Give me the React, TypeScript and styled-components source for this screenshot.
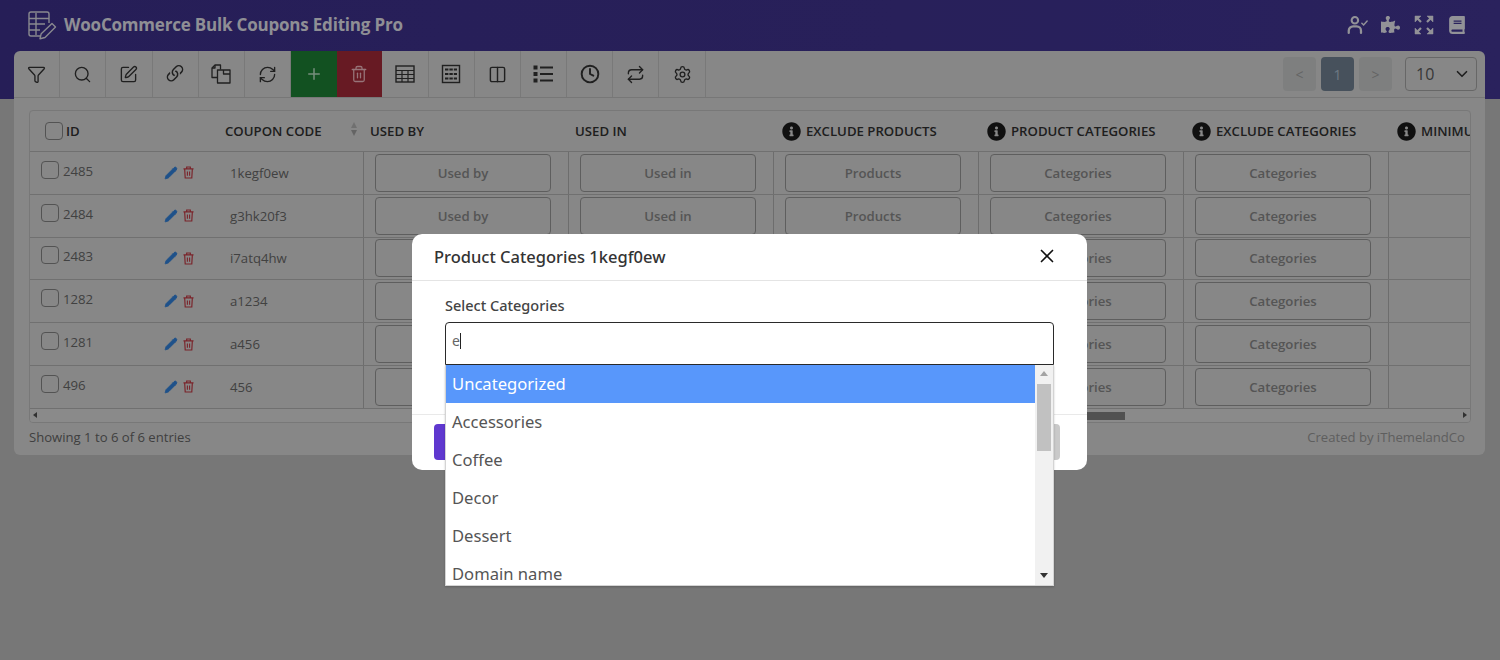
import React from 'react';
import styled, { createGlobalStyle } from 'styled-components';
import { Funnel, Search, SquarePen, RefreshCw, Plus, Trash2, Columns2, Clock, Repeat, Settings, Pencil, ChevronDown, X } from 'lucide-react';
import { FaPuzzlePiece, FaBook, FaInfoCircle } from 'react-icons/fa';
import { BsLink45Deg } from 'react-icons/bs';

const Global = createGlobalStyle`
  html, body { margin: 0; padding: 0; }
  body { background: #a3a3a3; font-family: "Open Sans", "Liberation Sans", sans-serif; overflow: hidden; }
  #root { width: 1500px; height: 660px; position: relative; overflow: hidden; }
`;

const Top = styled.header`
  height: 99px; box-sizing: border-box; padding: 0 33px 50px 27px;
  background: linear-gradient(90deg, #352a78 0%, #372c7c 60%, #3a2f80 100%);
  display: flex; align-items: center; gap: 7px;
`;
const Title = styled.h1`
  margin: 0; font-size: 17px; font-weight: 700; flex: 1; color: #c4c4cc; letter-spacing: -0.2px;
`;
const TopIcons = styled.div`
  display: flex; gap: 12px; align-items: center; color: #c8c8d0;
`;
const TopIcon = styled.span`
  width: 21px; height: 24px; display: flex; align-items: center; justify-content: center;
`;
const Card = styled.main`
  margin: -48px 15px 0 14px; height: 404px; background: #b9b9b9; border-radius: 6px;
  display: flex; flex-direction: column;
`;
const Toolbar = styled.div`
  height: 46px; display: flex; align-items: stretch; border-bottom: 1px solid #a4a4a4; flex: none;
  padding-right: 8px;
`;
const Tool = styled.button<{ $bg?: string; $fg?: string; $w?: number }>`
  width: ${p => p.$w ?? 46.2}px; flex: none; border: 0; padding: 0; display: flex; align-items: center; justify-content: center;
  background: ${p => p.$bg ?? 'transparent'}; color: ${p => p.$fg ?? '#2c2c2c'};
  border-right: 1px solid ${p => (p.$bg ? 'transparent' : '#a6a6a6')};
  &:first-child { border-top-left-radius: 6px; }
`;
const Pager = styled.div`
  margin-left: auto; display: flex; align-items: center; gap: 5px;
`;
const PageBtn = styled.span<{ $active?: boolean }>`
  width: 33px; height: 34px; border-radius: 4px; display: flex; align-items: center; justify-content: center;
  font-size: 14px; background: ${p => (p.$active ? '#62707e' : '#adafaf')}; color: ${p => (p.$active ? '#98a6b5' : '#8a8a8a')};
`;
const PerPage = styled.div`
  margin-left: 8px; width: 72px; height: 34px; box-sizing: border-box; border: 1px solid #8e8e8e; border-radius: 4px; display: flex; align-items: center;
  justify-content: space-between; padding: 0 5px 0 10px; font-size: 16px; color: #4d4d4d;
`;
const TableWrap = styled.section`
  margin: 12px 14px 0 15px; height: 313px; flex: none; box-sizing: border-box; border: 1px solid #a5a5a5; border-radius: 4px;
  overflow: hidden; position: relative; display: flex; flex-direction: column;
`;
const Row = styled.div<{ $head?: boolean }>`
  display: grid; grid-template-columns: 187px 147px repeat(5, 205px) 200px; flex: none;
  height: ${p => (p.$head ? 41 : 42.8)}px; border-bottom: 1px solid #9a9a9a; box-sizing: border-box;
`;
const HeadCell = styled.div<{ $pad?: number }>`
  display: flex; align-items: center; gap: 5px; padding-left: ${p => p.$pad ?? 8}px; font-size: 13.2px; font-weight: 600;
  color: #2a2a2a; white-space: nowrap; position: relative; overflow: hidden; text-transform: uppercase;
`;
const IdHead = styled(HeadCell)`
  gap: 3px; padding-left: 15px;
`;
const Cell = styled.div<{ $line?: boolean; $pad?: number }>`
  display: flex; align-items: center; box-sizing: border-box; padding-left: ${p => p.$pad ?? 0}px;
  font-size: 13.2px; color: #595959; border-right: 1px solid ${p => (p.$line === false ? 'transparent' : '#969696')}; min-width: 0;
`;
const Check = styled.span`
  width: 16px; height: 16px; border: 1px solid #727272; border-radius: 4px; flex: none; display: block;
`;
const IdCell = styled(Cell)`
  padding-left: 11px; gap: 4px;
`;
const IdText = styled.span`
  position: relative; top: -2px; width: 97px;
`;
const RowCheck = styled(Check)`
  position: relative; top: -3px;
`;
const ActionIcons = styled.span`
  display: flex; gap: 5px; align-items: center; color: #2a6fbd;
`;
const Sort = styled.span`
  position: absolute; right: 7px; top: 11px; display: flex; flex-direction: column; gap: 2px;
`;
const SortTri = styled.i<{ $down?: boolean }>`
  display: block; width: 0; height: 0; border-left: 3.5px solid transparent; border-right: 3.5px solid transparent;
  ${p => (p.$down ? 'border-top: 6px solid #8a8a8a;' : 'border-bottom: 6px solid #9a9a9a;')}
`;
const CellBtn = styled.button`
  width: 176px; height: 38px; margin-left: 11px; padding: 0; border: 1px solid #828282; border-radius: 4px; background: transparent;
  font: 600 13.2px "Open Sans", sans-serif; color: #757575;
`;
const HScroll = styled.div`
  flex: 1; position: relative; background: #bdbdbd; display: flex; align-items: center; justify-content: space-between; padding: 0 3px;
`;
const Arrow = styled.i<{ $dir: 'l' | 'r' }>`
  display: block; width: 0; height: 0; border-top: 3px solid transparent; border-bottom: 3px solid transparent;
  ${p => (p.$dir === 'l' ? 'border-right: 4px solid #444;' : 'border-left: 4px solid #444;')}
`;
const Thumb = styled.i`
  position: absolute; left: 570px; width: 525px; top: 3px; height: 8px; background: #707070;
`;
const CardFoot = styled.footer`
  flex: 1; display: flex; align-items: center; justify-content: space-between; padding: 0 20px 4px 15px; font-size: 13.1px; color: #575757;
`;
const Credit = styled.span`
  color: #828282;
`;
const Backdrop = styled.div`
  position: absolute; inset: 0; background: rgba(0,0,0,.27); display: flex; justify-content: center; align-items: flex-start; padding-top: 234px;
`;
const Modal = styled.div`
  width: 675px; height: 236px; background: #fff; border-radius: 10px; display: flex; flex-direction: column; margin-right: 1px;
  font-family: "Noto Sans", "Open Sans", sans-serif; position: relative;
`;
const ModalHead = styled.div`
  height: 47px; flex: none; box-sizing: border-box; padding: 0 29px 2px 22px; border-bottom: 1px solid #e4e4e4; display: flex; align-items: center; justify-content: space-between;
  color: #333; font-size: 16.5px; font-weight: 500;
`;
const ModalBody = styled.div`
  height: 134px; flex: none; box-sizing: border-box; padding: 14px 33px 0; border-bottom: 1px solid #e9e9e9;
`;
const Label = styled.label`
  display: block; font-size: 14.5px; font-weight: 500; color: #444; margin-bottom: 6px; line-height: 21px;
`;
const Field = styled.div`
  position: relative;
`;
const Input = styled.div`
  height: 43px; box-sizing: border-box; border: 1px solid #2a2a2a; border-radius: 4px 4px 0 0; display: flex; align-items: center; padding: 0 0 6px 6px;
  font-size: 14px; color: #666;
`;
const Caret = styled.span`
  width: 1px; height: 16px; background: #222;
`;
const List = styled.div`
  position: absolute; left: 0; right: 0; top: 43px; height: 221px; background: #fff; overflow: hidden; border: 1px solid #d4d4d4; border-top: 0;
  box-sizing: border-box; box-shadow: 0 1px 2px rgba(0,0,0,.2); display: flex;
`;
const Options = styled.div`
  flex: 1;
`;
const Option = styled.div<{ $on?: boolean }>`
  height: 38px; line-height: 38px; padding-left: 6px; font-size: 16.6px; background: ${p => (p.$on ? '#5897fb' : 'transparent')}; color: ${p => (p.$on ? '#fff' : '#555')};
`;
const Track = styled.div`
  width: 18px; flex: none; background: #f1f1f1; display: flex; flex-direction: column; align-items: center; position: relative;
`;
const TrackThumb = styled.i`
  position: absolute; top: 19px; left: 2px; width: 14px; height: 67px; background: #c1c1c1;
`;
const UpTri = styled.i`
  position: absolute; top: 6px; width: 0; height: 0; border-left: 4px solid transparent; border-right: 4px solid transparent; border-bottom: 5px solid #a3a3a3;
`;
const DownTri = styled.i`
  position: absolute; bottom: 7px; width: 0; height: 0; border-left: 4px solid transparent; border-right: 4px solid transparent; border-top: 5px solid #333;
`;
const ModalFoot = styled.div`
  flex: 1; display: flex; justify-content: space-between; align-items: flex-start; padding: 9px 27px 0 22px;
`;
const FootBtn = styled.button<{ $primary?: boolean }>`
  width: 72px; height: 36px; border: 0; border-radius: 4px; color: #fff; font: 500 14px "Noto Sans", sans-serif;
  background: ${p => (p.$primary ? '#5f38cf' : '#c9c9c9')};
`;

const stroke = { strokeWidth: 1.7 };

const DashedTable = () => (
  <svg width="20" height="20" viewBox="0 0 20 20" fill="none" stroke="#2c2c2c">
    <rect x="1.5" y="1.5" width="17" height="17" strokeWidth="1.4" />
    <path d="M4 5.5h12M4 10h12M4 14.5h12" strokeWidth="2" strokeDasharray="3.4 1" />
  </svg>
);
const GridTable = () => (
  <svg width="20" height="18" viewBox="0 0 20 18" fill="none" stroke="#2c2c2c" strokeWidth="1.2">
    <rect x="1" y="1" width="18" height="16" strokeWidth="1.4" />
    <path d="M1 5.5h18M1 9.5h18M1 13.5h18M7 5v12M13 5v12" />
  </svg>
);
const BoldList = () => (
  <svg width="20" height="18" viewBox="0 0 20 18" fill="#2c2c2c">
    <rect x="0.5" y="0.5" width="4" height="4" /><rect x="0.5" y="7" width="4" height="4" /><rect x="0.5" y="13.5" width="4" height="4" />
    <rect x="7" y="1.5" width="13" height="2" /><rect x="7" y="8" width="13" height="2" /><rect x="7" y="14.5" width="13" height="2" />
  </svg>
);
const CopyDocs = () => (
  <svg width="20" height="20" viewBox="0 0 20 20" fill="none" stroke="#2c2c2c" strokeWidth="1.3" strokeLinejoin="round">
    <path d="M6.5 13.5H1V4l3-3h5.5v4.5" />
    <path d="M4 1v3H1" />
    <path d="M6.5 6H13v0h6v13H6.5z" />
    <path d="M12.5 6v4h6.5" />
  </svg>
);
const Logo = () => (
  <svg width="30" height="30" viewBox="0 0 30 30" fill="none" stroke="#bcbcc4" strokeWidth="1.4" strokeLinejoin="round">
    <path d="M13 26H4a2 2 0 0 1-2-2V4a2 2 0 0 1 2-2h16a2 2 0 0 1 2 2v9" />
    <path d="M2 8.5h20M2 14h16M2 20h11M9 3v22" />
    <path d="M25 13.5l3.5 3.5L18 27.5l-5 1.2 1.2-5z" />
  </svg>
);
const TrashOutline = () => (
  <svg width="11" height="13" viewBox="0 0 12 14" fill="none" stroke="#a8323b" strokeWidth="1.3">
    <path d="M0.5 3h11M4 3V1h4v2M1.8 3l.6 10h7.2l.6-10" /><path d="M4.8 6v4.5M7.2 6v4.5" strokeWidth="1.2" />
  </svg>
);
const UserTick = () => (
  <svg width="24" height="22" viewBox="0 0 24 22" fill="none" stroke="#c8c8d0" strokeLinecap="round">
    <circle cx="9" cy="5.5" r="3.7" strokeWidth="2.4" />
    <path d="M2 20v-2.5a5 5 0 0 1 5-5h4a5 5 0 0 1 5 5V20" strokeWidth="2.6" />
    <path d="M17 9l2 2 4-4.5" strokeWidth="1.7" />
  </svg>
);
const ExpandArrows = () => (
  <svg width="20" height="20" viewBox="0 0 20 20" fill="#c8c8d0" stroke="#c8c8d0">
    <path d="M1 1h6L1 7zM19 1h-6l6 6zM1 19h6l-6-6zM19 19h-6l6-6z" strokeWidth="0.5" />
    <path d="M3 3l4 4M17 3l-4 4M3 17l4-4M17 17l-4-4" strokeWidth="2.2" />
  </svg>
);

const rows: [string, string][] = [
  ['2485', '1kegf0ew'], ['2484', 'g3hk20f3'], ['2483', 'i7atq4hw'], ['1282', 'a1234'], ['1281', 'a456'], ['496', '456'],
];
const cols = ['Used by', 'Used in', 'Products', 'Categories', 'Categories'];
const infoCols = ['Exclude products', 'Product categories', 'Exclude categories', 'Minimum spend'];
const options = ['Uncategorized', 'Accessories', 'Coffee', 'Decor', 'Dessert', 'Domain name'];

export default function App() {
  return (
    <>
      <Global />
      <Top>
        <Logo />
        <Title>WooCommerce Bulk Coupons Editing Pro</Title>
        <TopIcons>
          <TopIcon><UserTick /></TopIcon>
          <TopIcon><FaPuzzlePiece size={19} /></TopIcon>
          <TopIcon><ExpandArrows /></TopIcon>
          <TopIcon><FaBook size={18} /></TopIcon>
        </TopIcons>
      </Top>
      <Card>
        <Toolbar>
          <Tool><Funnel size={19} {...stroke} /></Tool>
          <Tool><Search size={19} {...stroke} /></Tool>
          <Tool><SquarePen size={19} {...stroke} /></Tool>
          <Tool><BsLink45Deg size={24} /></Tool>
          <Tool><CopyDocs /></Tool>
          <Tool><RefreshCw size={19} {...stroke} /></Tool>
          <Tool $bg="#19702e" $fg="#a3c2ab"><Plus size={18} strokeWidth={2} /></Tool>
          <Tool $bg="#8e2430" $fg="#cfa0a6" $w={45}><Trash2 size={18} {...stroke} /></Tool>
          <Tool><GridTable /></Tool>
          <Tool><DashedTable /></Tool>
          <Tool><Columns2 size={19} strokeWidth={1.8} /></Tool>
          <Tool><BoldList /></Tool>
          <Tool><Clock size={20} strokeWidth={2.3} /></Tool>
          <Tool><Repeat size={19} {...stroke} /></Tool>
          <Tool><Settings size={19} {...stroke} /></Tool>
          <Pager>
            <PageBtn>&lt;</PageBtn>
            <PageBtn $active>1</PageBtn>
            <PageBtn>&gt;</PageBtn>
            <PerPage>10<ChevronDown size={18} strokeWidth={2.2} color="#2a2a2a" /></PerPage>
          </Pager>
        </Toolbar>
        <TableWrap>
          <Row $head>
            <IdHead><Check />ID</IdHead>
            <HeadCell>Coupon code<Sort><SortTri /><SortTri $down /></Sort></HeadCell>
            <HeadCell $pad={6}>Used by</HeadCell>
            <HeadCell $pad={6}>Used in</HeadCell>
            {infoCols.map(c => (
              <HeadCell key={c}><FaInfoCircle size={19} color="#161616" />{c}</HeadCell>
            ))}
          </Row>
          {rows.map(([id, code]) => (
            <Row key={id}>
              <IdCell $line={false}>
                <RowCheck />
                <IdText>{id}</IdText>
                <ActionIcons>
                  <Pencil size={14} fill="#2a6fbd" strokeWidth={1.5} />
                  <TrashOutline />
                </ActionIcons>
              </IdCell>
              <Cell $pad={13}>{code}</Cell>
              {cols.map((c, i) => (
                <Cell key={i}><CellBtn>{c}</CellBtn></Cell>
              ))}
              <Cell $line={false} />
            </Row>
          ))}
          <HScroll>
            <Arrow $dir="l" />
            <Thumb />
            <Arrow $dir="r" />
          </HScroll>
        </TableWrap>
        <CardFoot>
          <span>Showing 1 to 6 of 6 entries</span>
          <Credit>Created by iThemelandCo</Credit>
        </CardFoot>
      </Card>
      <Backdrop>
        <Modal>
          <ModalHead>
            Product Categories 1kegf0ew
            <X size={22} strokeWidth={1.8} color="#111" />
          </ModalHead>
          <ModalBody>
            <Label>Select Categories</Label>
            <Field>
              <Input>e<Caret /></Input>
              <List>
                <Options>
                  {options.map((o, i) => (
                    <Option key={o} $on={i === 0}>{o}</Option>
                  ))}
                </Options>
                <Track>
                  <UpTri />
                  <TrackThumb />
                  <DownTri />
                </Track>
              </List>
            </Field>
          </ModalBody>
          <ModalFoot>
            <FootBtn $primary>Save</FootBtn>
            <FootBtn>Close</FootBtn>
          </ModalFoot>
        </Modal>
      </Backdrop>
    </>
  );
}
